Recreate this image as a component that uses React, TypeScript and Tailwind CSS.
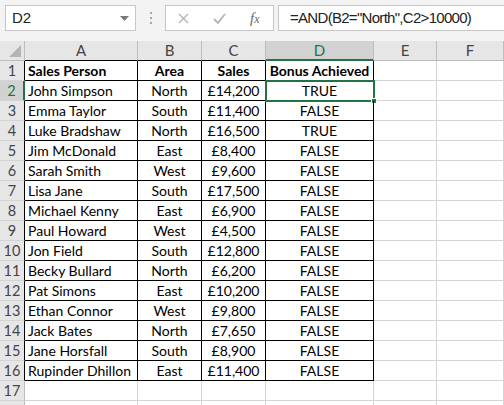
const rows: [string, string, string, string][] = [
  ["John Simpson", "North", "£14,200", "TRUE"],
  ["Emma Taylor", "South", "£11,400", "FALSE"],
  ["Luke Bradshaw", "North", "£16,500", "TRUE"],
  ["Jim McDonald", "East", "£8,400", "FALSE"],
  ["Sarah Smith", "West", "£9,600", "FALSE"],
  ["Lisa Jane", "South", "£17,500", "FALSE"],
  ["Michael Kenny", "East", "£6,900", "FALSE"],
  ["Paul Howard", "West", "£4,500", "FALSE"],
  ["Jon Field", "South", "£12,800", "FALSE"],
  ["Becky Bullard", "North", "£6,200", "FALSE"],
  ["Pat Simons", "East", "£10,200", "FALSE"],
  ["Ethan Connor", "West", "£9,800", "FALSE"],
  ["Jack Bates", "North", "£7,650", "FALSE"],
  ["Jane Horsfall", "South", "£8,900", "FALSE"],
  ["Rupinder Dhillon", "East", "£11,400", "FALSE"],
];

const cols = ["A", "B", "C", "D", "E", "F"];

function RowHeader({ n }: { n: number }) {
  const selected = n === 2;
  const inTable = n <= 16;
  return (
    <div
      className={`h-5 flex items-center justify-center border-b border-b-[#d4d4d4] border-r text-[14.5px] ${
        selected
          ? "bg-[#d2d2d2] text-[#217346] border-r-[#217346] border-r-2"
          : inTable
          ? "bg-[#e6e6e6] text-[#444] border-r-black"
          : "bg-[#e6e6e6] text-[#444] border-r-[#bdbdbd]"
      }`}
    >
      {n}
    </div>
  );
}

export default function App() {
  return (
    <div className="w-[504px] h-[405px] overflow-hidden bg-white font-['Lato','Liberation_Sans',sans-serif] text-[14px] text-black">
      {/* formula bar */}
      <div className="h-[41px] bg-[#f3f3f3] flex items-start pt-[5px] pl-[5px]">
        <div className="w-[131px] h-[26px] bg-white border border-[#c6c6c6] flex items-center justify-between pl-[6px] pr-[6px]">
          <span className="text-[15px] text-[#222] font-['Liberation_Sans',sans-serif]">D2</span>
          <svg width="9" height="5" viewBox="0 0 9 5">
            <path d="M0 0 H9 L4.5 5 Z" fill="#7a7a7a" />
          </svg>
        </div>
        <div className="w-[29px] h-[26px] flex flex-col items-center justify-center gap-[3px]">
          <span className="w-[2px] h-[2px] bg-[#a6a6a6]" />
          <span className="w-[2px] h-[2px] bg-[#a6a6a6]" />
          <span className="w-[2px] h-[2px] bg-[#a6a6a6]" />
        </div>
        <div className="w-[109px] h-[26px] bg-white border border-[#c6c6c6] flex items-center pl-[12px]">
          <svg width="11" height="11" viewBox="0 0 11 11" className="mr-[24px]">
            <path d="M1 1 L10 10 M10 1 L1 10" stroke="#b4b4b4" strokeWidth="1.4" />
          </svg>
          <svg width="13" height="11" viewBox="0 0 13 11" className="mr-[24px]">
            <path d="M1 6 L5 10 L12 1" stroke="#b4b4b4" strokeWidth="1.8" fill="none" />
          </svg>
          <span className="italic font-['Liberation_Serif',serif] text-[15px] text-[#6a6a6a] leading-none">
            f<span className="text-[12px]">x</span>
          </span>
        </div>
        <div className="ml-[4px] flex-1 h-[26px] bg-white border border-[#c6c6c6] border-r-0 flex items-center pl-[11px]">
          <span className="text-[15px] text-[#222] font-['Liberation_Sans',sans-serif] tracking-[-0.7px]">
            =AND(B2="North",C2&gt;10000)
          </span>
        </div>
      </div>

      {/* grid */}
      <div className="grid grid-cols-[25px_113px_64px_64px_108px_63px_67px]">
        {/* column header row */}
        <div className="h-5 bg-[#e6e6e6] border-r border-b border-[#bdbdbd] relative">
          <svg width="12" height="12" viewBox="0 0 12 12" className="absolute right-[3px] bottom-[3px]">
            <path d="M12 0 V12 H0 Z" fill="#b4b4b4" />
          </svg>
        </div>
        {cols.map((c) => {
          const sel = c === "D";
          const table = c === "A" || c === "B" || c === "C";
          return (
            <div
              key={c}
              className={`h-5 flex items-center justify-center border-r border-r-[#bdbdbd] text-[15px] ${
                sel
                  ? "bg-[#d2d2d2] text-[#217346] border-b-2 border-b-[#217346]"
                  : table
                  ? "bg-[#e6e6e6] text-[#444] border-b border-b-black"
                  : "bg-[#e6e6e6] text-[#444] border-b border-b-[#bdbdbd]"
              }`}
            >
              {c}
            </div>
          );
        })}

        {/* row 1 */}
        <RowHeader n={1} />
        <div className="h-5 flex items-center px-[3px] font-bold border-r border-b border-black">Sales Person</div>
        <div className="h-5 flex items-center justify-center font-bold border-r border-b border-black">Area</div>
        <div className="h-5 flex items-center justify-center font-bold border-r border-b border-black">Sales</div>
        <div className="h-5 flex items-center justify-center font-bold border-r border-b border-black whitespace-nowrap">Bonus Achieved</div>
        <div className="h-5 border-r border-b border-[#d4d4d4]" />
        <div className="h-5 border-r border-b border-[#d4d4d4]" />

        {rows.map((r, i) => {
          const n = i + 2;
          return [
            <RowHeader key={`h${n}`} n={n} />,
            <div key={`a${n}`} className="h-5 flex items-center px-[3px] whitespace-nowrap border-r border-b border-black">
              {r[0]}
            </div>,
            <div key={`b${n}`} className="h-5 flex items-center justify-center border-r border-b border-black">
              {r[1]}
            </div>,
            <div key={`c${n}`} className="h-5 flex items-center justify-center border-r border-b border-black">
              {r[2]}
            </div>,
            <div key={`d${n}`} className="h-5 relative flex items-center justify-center border-r border-b border-black">
              {r[3]}
              {n === 2 && (
                <>
                  <div className="absolute left-[-1px] top-[-1px] right-[-2px] bottom-[-2px] border-2 border-[#217346]" />
                  <div className="absolute right-[-4px] bottom-[-4px] w-[6px] h-[6px] bg-[#217346] border border-white" />
                </>
              )}
            </div>,
            <div key={`e${n}`} className="h-5 border-r border-b border-[#d4d4d4]" />,
            <div key={`f${n}`} className="h-5 border-r border-b border-[#d4d4d4]" />,
          ];
        })}

        {/* row 17 */}
        <RowHeader n={17} />
        {cols.map((c) => (
          <div key={`17${c}`} className="h-5 border-r border-b border-[#d4d4d4]" />
        ))}
        <div className="h-5 bg-[#e6e6e6] border-r border-[#bdbdbd]" />
        {cols.map((c) => (
          <div key={`18${c}`} className="h-5 border-r border-[#d4d4d4]" />
        ))}
      </div>
    </div>
  );
}
